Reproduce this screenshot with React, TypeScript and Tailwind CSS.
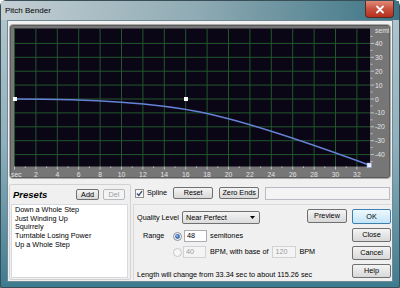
import React from "react";

const font = "font-['Liberation_Sans',Arial,sans-serif]";

function Btn({
  children,
  className = "",
  disabled = false,
  primary = false,
}: {
  children: React.ReactNode;
  className?: string;
  disabled?: boolean;
  primary?: boolean;
}) {
  const look = primary
    ? "border-[#3c7fb1] bg-gradient-to-b from-[#eef8fe] to-[#c3e4f7] text-black"
    : disabled
    ? "border-[#b5b9bc] bg-[#f4f4f4] text-[#9c9c9c]"
    : "border-[#707070] bg-gradient-to-b from-[#f4f4f4] to-[#d8d8d8] text-black";
  return (
    <div
      className={`flex shrink-0 items-center justify-center rounded-[2px] border text-[7.25px] leading-none ${look} ${className}`}
    >
      {children}
    </div>
  );
}

function Radio({ on = false }: { on?: boolean }) {
  return (
    <svg width="9" height="9" viewBox="0 0 9 9" className="shrink-0">
      <circle cx="4.5" cy="4.5" r="4" fill={on ? "#f4f4f4" : "#f6f6f6"} stroke={on ? "#8a8f95" : "#c4c6c8"} />
      {on && <circle cx="4.5" cy="4.5" r="2.4" fill="#3f74b8" />}
      {on && <circle cx="4.1" cy="4" r="0.9" fill="#9cc4ec" />}
    </svg>
  );
}

function Chart() {
  const xs = Array.from({ length: 17 }, (_, k) => 14.5 + k * 21.4);
  const vs = [40, 30, 20, 10, 0, -10, -20, -30, -40];
  const y = (v: number) => 99 - v * 1.39;
  const secTicks = Array.from({ length: 34 }, (_, s) => s);
  const semiTicks = Array.from({ length: 19 }, (_, i) => 45 - i * 5);
  return (
    <svg width="382" height="155" viewBox="9 24 382 155" className="block">
      <rect x="14" y="28.5" width="356" height="138" fill="#0a0615" />
      {xs.map((x, i) => (
        <line key={"v" + i} x1={x} y1="28.5" x2={x} y2="166" stroke="#22572a" strokeWidth="1" />
      ))}
      {vs.map((v) => (
        <line key={"h" + v} x1="14" y1={y(v)} x2="370" y2={y(v)} stroke="#22572a" strokeWidth="1" />
      ))}
      {secTicks.map((s) => (
        <line
          key={"st" + s}
          x1={14.5 + s * 10.7}
          y1="166.5"
          x2={14.5 + s * 10.7}
          y2={s % 2 === 0 ? 169.5 : 168}
          stroke="#d8d8d8"
          strokeWidth="0.8"
        />
      ))}
      {semiTicks.map((v) => (
        <line
          key={"sm" + v}
          x1="370.5"
          y1={y(v)}
          x2={v % 10 === 0 ? 374 : 372.5}
          y2={y(v)}
          stroke="#d8d8d8"
          strokeWidth="0.8"
        />
      ))}
      <g fill="#e4e4e4" fontSize="6.8" fontFamily="'Liberation Sans', Arial, sans-serif">
        <text x="11" y="177">sec</text>
        {xs.slice(1).map((x, i) => (
          <text key={"l" + i} x={x} y="177" textAnchor="middle">
            {(i + 1) * 2}
          </text>
        ))}
        <text x="375" y="33">semi</text>
        {vs.map((v) => (
          <text key={"sl" + v} x="375" y={y(v) + 2.5}>
            {v}
          </text>
        ))}
      </g>
      <path
        d="M15 99 C 90 99, 150 102, 200 112 C 250 122, 320 147, 369 165"
        fill="none"
        stroke="#6582d6"
        strokeWidth="1.6"
      />
      <rect x="13" y="97" width="4" height="4" fill="#ffffff" />
      <rect x="184" y="97" width="4" height="4" fill="#ffffff" />
      <rect x="367" y="163" width="4.5" height="4.5" fill="#e8eeff" stroke="#8aa0e0" strokeWidth="0.6" />
    </svg>
  );
}

export default function App() {
  return (
    <div className={`w-[400px] h-[288px] overflow-hidden ${font}`}>
      <div className="flex h-[288px] w-[400px] flex-col rounded-t-[6px] border border-[#3a4e58] bg-gradient-to-b from-[#b5c7ce] via-[#8fb0bc] to-[#3d7c90]">
        {/* title bar */}
        <div className="flex h-[19px] shrink-0 items-start bg-gradient-to-r from-[#c4cfd4] via-[#8eaab3] to-[#3b7585] pl-[4px] pr-[5px]">
          <span className="mt-[6px] text-[8px] leading-none text-black">Pitch Bender</span>
          <div className="ml-auto flex h-[17px] w-[29px] items-center justify-center rounded-b-[4px] border border-t-0 border-[#5a2a22] bg-gradient-to-b from-[#e08a78] via-[#c7503e] to-[#b52f1c]">
            <svg width="10" height="9" viewBox="0 0 10 9">
              <path d="M2 1.5 L8 7.5 M8 1.5 L2 7.5" stroke="#ffffff" strokeWidth="1.8" strokeLinecap="round" />
            </svg>
          </div>
        </div>

        {/* client */}
        <div className="mx-[6px] flex h-[262px] shrink-0 flex-col border border-[#6f8894] bg-[#f0f0f0] px-px">
          <div className="mt-[3px] h-[155px] w-[382px] rounded-[4px] border border-[#a9a9a9] bg-[#767676] [box-shadow:inset_0_0_0_1px_#5c5c5c]">
            <div className="-m-px">
              <Chart />
            </div>
          </div>

          <div className="mt-[5px] flex flex-1 gap-[2px] pb-px">
            {/* presets */}
            <div className="flex w-[122px] shrink-0 flex-col rounded-[2px] border border-[#d2d2d2] bg-[#f0f0f0] pr-[2px] pb-px">
              <div className="flex h-[19px] shrink-0 items-center pl-[3px] pr-[3px]">
                <span className="text-[9.5px] font-bold italic leading-none">Presets</span>
                <Btn className="ml-auto h-[11px] w-[23px]">Add</Btn>
                <Btn disabled className="ml-[4px] h-[11px] w-[22px]">
                  Del
                </Btn>
              </div>
              <div className="ml-px flex-1 border border-[#d6d9dd] bg-white px-[3px] pt-[1px] text-[7.25px] leading-[8.7px] text-black">
                <div>Down a Whole Step</div>
                <div>Just Winding Up</div>
                <div>Squirrely</div>
                <div>Turntable Losing Power</div>
                <div>Up a Whole Step</div>
              </div>
            </div>

            {/* right side */}
            <div className="flex flex-1 flex-col">
              <div className="mt-[2px] flex h-[14px] items-center pl-[2px] text-[7.25px] leading-none">
                <svg width="9" height="9" viewBox="0 0 9 9" className="shrink-0">
                  <rect x="0.5" y="0.5" width="8" height="8" fill="#f6f6f6" stroke="#8e8f8f" />
                  <path d="M2 4.6 L3.8 6.4 L7 2.2" fill="none" stroke="#3c4f7a" strokeWidth="1.4" />
                </svg>
                <span className="ml-[3px]">Spline</span>
                <Btn className="ml-[6px] h-[12px] w-[40px]">Reset</Btn>
                <Btn className="ml-[6px] h-[12px] w-[40px]">Zero Ends</Btn>
                <div className="ml-[6px] mr-px h-[13px] flex-1 border border-[#b8bcc2] bg-[#f4f4f4]" />
              </div>

              <div className="mt-[4px] flex flex-1 border-l border-t border-[#d9d9d9] text-[7.25px] leading-none">
                <div className="flex w-0 min-w-0 flex-1 flex-col whitespace-nowrap pl-[3px]">
                  <div className="mt-[6px] flex h-[13px] items-center">
                    <span className="w-[45px] shrink-0">Quality Level</span>
                    <div className="flex h-[13px] w-[78px] shrink-0 items-center rounded-[2px] border border-[#707070] bg-gradient-to-b from-[#f4f4f4] to-[#dcdcdc] pl-[3px] pr-[4px]">
                      <span>Near Perfect</span>
                      <svg width="5" height="3" viewBox="0 0 5 3" className="ml-auto">
                        <path d="M0 0 H5 L2.5 3 Z" fill="#000" />
                      </svg>
                    </div>
                  </div>
                  <div className="mt-[6px] flex h-[12px] items-center">
                    <span className="ml-[6px] w-[30px] shrink-0">Range</span>
                    <Radio on />
                    <div className="ml-[2px] flex h-[12px] w-[23px] shrink-0 items-center border border-[#abadb3] bg-white pl-[2px]">48</div>
                    <span className="ml-[3px]">semitones</span>
                  </div>
                  <div className="mt-[4px] flex h-[12px] items-center">
                    <span className="ml-[6px] w-[30px] shrink-0" />
                    <Radio />
                    <div className="ml-[1px] flex h-[12px] w-[23px] shrink-0 items-center border border-[#d0d2d6] bg-[#f4f4f4] pl-[2px] text-[#9c9c9c]">
                      40
                    </div>
                    <span className="ml-[4px] shrink-0">BPM, with base of</span>
                    <div className="ml-[4px] flex h-[12px] w-[24px] shrink-0 items-center border border-[#d0d2d6] bg-[#f4f4f4] pl-[2px] text-[#9c9c9c]">
                      120
                    </div>
                    <span className="ml-[3px] shrink-0">BPM</span>
                  </div>
                  <div className="mt-[13px]">Length will change from 33.34 sec to about 115.26 sec</div>
                </div>
                <Btn className="mt-[4px] h-[14px] w-[40px]">Preview</Btn>
                <div className="ml-[5px] mt-[4px] flex w-[39px] shrink-0 flex-col gap-[4px] pr-px">
                  <Btn primary className="h-[15px] w-[39px]">
                    OK
                  </Btn>
                  <Btn className="h-[14px] w-[39px]">Close</Btn>
                  <Btn className="h-[14px] w-[39px]">Cancel</Btn>
                  <Btn className="h-[14px] w-[39px]">Help</Btn>
                </div>
              </div>
            </div>
          </div>
        </div>
      </div>
    </div>
  );
}
